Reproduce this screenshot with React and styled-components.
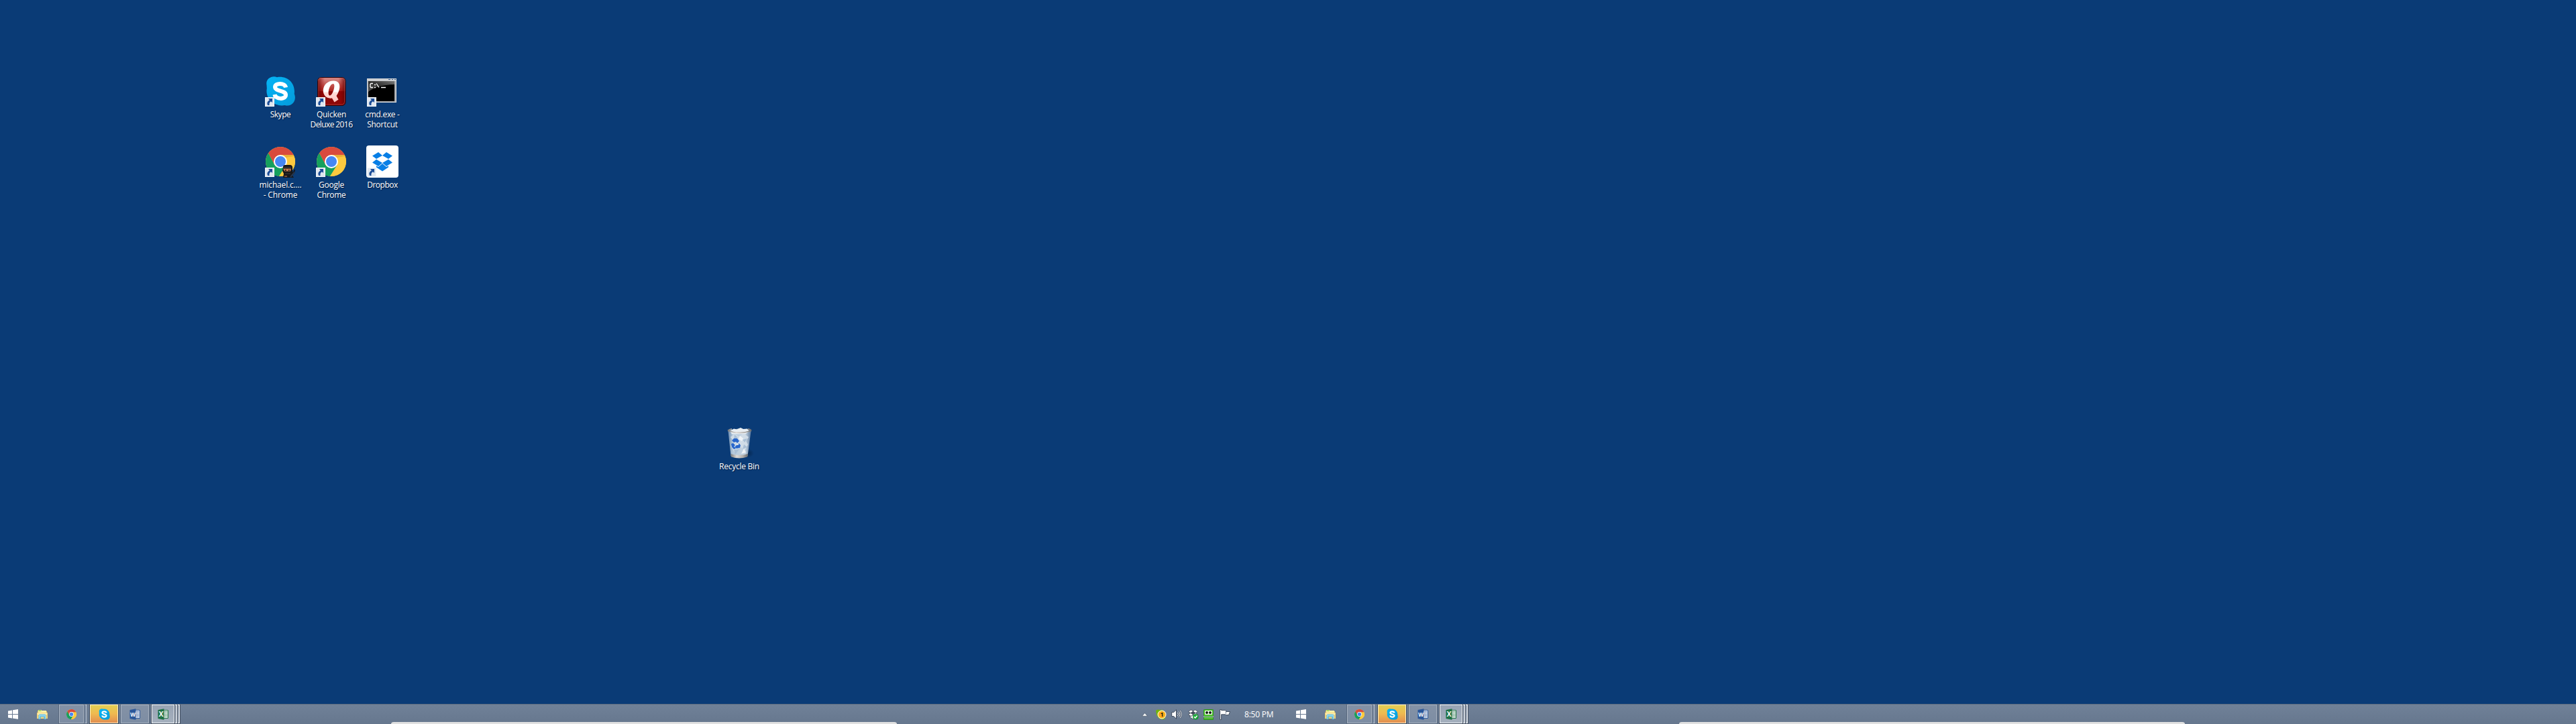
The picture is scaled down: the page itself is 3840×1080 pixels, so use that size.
import React from 'react';
import styled, { createGlobalStyle, css } from 'styled-components';

const GlobalStyle = createGlobalStyle`
  *, *::before, *::after { box-sizing: border-box; }
  html, body { margin: 0; padding: 0; background: #0a3b76; overflow: hidden; }
`;

const Desktop = styled.main`
  width: 3840px;
  height: 1080px;
  display: flex;
  flex-direction: column;
  background: #0a3b76;
  font-family: 'Open Sans', 'Noto Sans', sans-serif;
  overflow: hidden;
`;

const Wallpaper = styled.section`
  flex: 1;
  position: relative;
`;

const IconGrid = styled.div`
  position: absolute;
  left: 380px;
  top: 112px;
  display: grid;
  grid-template-columns: repeat(3, 76px);
  grid-auto-rows: 105px;
`;

const LoosePlace = styled.div`
  position: absolute;
  left: 1064px;
  top: 637px;
  width: 76px;
`;

const Shortcut = styled.figure`
  margin: 0;
  display: flex;
  flex-direction: column;
  align-items: center;
`;

const IconBox = styled.div`
  position: relative;
  width: 48px;
  height: 48px;
  svg { display: block; }
`;

const Arrow = styled.span`
  position: absolute;
  left: 1px;
  bottom: 1px;
  width: 14px;
  height: 14px;
`;

const Caption = styled.figcaption`
  margin-top: 3px;
  display: flex;
  flex-direction: column;
  align-items: center;
`;

const CaptionLine = styled.span`
  font-size: 12px;
  line-height: 15px;
  letter-spacing: ${p => p.$track || 0}px;
  color: #fff;
  white-space: nowrap;
  text-shadow: 1px 1px 1px rgba(0, 10, 40, 0.7);
`;

const ArrowBadge = () => (
  <Arrow>
    <svg width="14" height="14" viewBox="0 0 14 14">
      <rect width="14" height="14" fill="#dfe7f0" />
      <rect x=".5" y=".5" width="13" height="13" fill="none" stroke="#f3f6fa" />
      <path d="M5 2h6v6L9 6.300C6.800 7.500 6 9.200 6.600 12H4.200C2.300 9.100 3.800 5.700 6.900 4.200Z" fill="#1c4d98" />
    </svg>
  </Arrow>
);

const SkypeIcon = ({ size = 48 }) => (
  <svg width={size} height={size} viewBox={size === 48 ? '-2 -2 48 48' : '-0.500 -0.500 45 45'}>
    <defs>
      <linearGradient id="skypeFill" x1="0" y1="0" x2="1" y2="1">
        <stop stopColor="#05b4f5" /><stop offset="1" stopColor="#049bdb" />
      </linearGradient>
    </defs>
    <path d="M1.500 13C-.5 4 9-2 17 1.200 31-1.500 45 9 42.700 26c4 9-2.500 20-14 17C13 46-1 33 1.800 18Z" fill="url(#skypeFill)" />
    <path d="M30 16.500C29 9 13.800 9.200 14 16 14.300 22.600 30 20.500 30 27.500 30 35 14.500 34.500 13.500 27" fill="none" stroke="#fff" strokeWidth="6" />
  </svg>
);

const QuickenIcon = () => (
  <svg width="48" height="48" viewBox="0 0 48 48">
    <defs>
      <linearGradient id="quickenFill" x1="0" y1="0" x2="0" y2="1">
        <stop stopColor="#d8908c" /><stop offset=".48" stopColor="#b02520" /><stop offset=".5" stopColor="#8b0707" /><stop offset="1" stopColor="#8d0808" />
      </linearGradient>
      <linearGradient id="quickenEdge" x1="0" y1="0" x2="1" y2="0">
        <stop stopColor="#5a0000" stopOpacity=".8" /><stop offset=".25" stopColor="#a00" stopOpacity="0" /><stop offset=".75" stopColor="#a00" stopOpacity="0" /><stop offset="1" stopColor="#500" stopOpacity=".8" />
      </linearGradient>
      <linearGradient id="letterFill" x1="0" y1="0" x2="0" y2="1">
        <stop stopColor="#fff" /><stop offset=".5" stopColor="#fff" /><stop offset=".55" stopColor="#ffdedb" /><stop offset="1" stopColor="#ffc2bd" />
      </linearGradient>
    </defs>
    <rect x="3.500" y="3.500" width="41.500" height="42" rx="5" fill="url(#quickenFill)" stroke="#310306" />
    <rect x="4" y="4" width="40.500" height="41" rx="5" fill="url(#quickenEdge)" />
    <rect x="5" y="5" width="38.500" height="39" rx="4" fill="none" stroke="#d96d68" strokeOpacity=".4" />
    <path fillRule="evenodd" d="M27.500 8.500C38 8.500 39 20 31.500 31l3 5.500-6 4-3.500-6C7 37 7 8.500 27.500 8.500ZM26.800 13C20.500 13 17.500 30 21.500 30.500 26 31 31 13.500 26.800 13Z" fill="url(#letterFill)" />
  </svg>
);

const CmdIcon = () => (
  <svg width="48" height="48" viewBox="0 0 48 48">
    <defs>
      <linearGradient id="cmdGlare" x1="0" y1="1" x2="1" y2="0">
        <stop stopColor="#555" /><stop offset=".5" stopColor="#303030" /><stop offset="1" stopColor="#777" />
      </linearGradient>
    </defs>
    <rect x="1" y="5" width="44" height="36" fill="#a8abb0" />
    <rect x="1.500" y="5.500" width="43" height="35" fill="none" stroke="#d6d6d6" />
    <rect x="2" y="6" width="42" height="3" fill="#cdcfd2" />
    <path d="M33 6h3v1h-3zM38 6h2v1h-2zM42 6h2v1h-2z" fill="#315889" />
    <rect x="3" y="9" width="39" height="30" fill="#000" />
    <path d="M3 9h39v5C24 14 10 19 3 25Z" fill="url(#cmdGlare)" />
    <path d="M10 12.500H7l-1 1v4l1 1h3M12 14.500h2M12 18.500h2M15 12.500l4 6M22 18.500h7" fill="none" stroke="#fff" strokeWidth="1.300" />
  </svg>
);

const ChromeArt = () => (
  <>
    <circle cx="22" cy="22" r="22" fill="#fdcb3f" />
    <path d="M22 12h19.600A22 22 0 0 0 4 9.500L13.400 27Z" fill="#d94a3d" />
    <path d="M4 9.500A22 22 0 0 0 20 44L30.700 27 22 32l-8.600-5Z" fill="#16a05e" />
    <path d="M22 12h19.600A22 22 0 0 1 20 44L30.700 27Z" fill="#fdc93f" />
    <path d="M22 12h19.600l.7 2L29 16Z" fill="#c57f25" opacity=".35" />
    <circle cx="22" cy="22" r="10" fill="#fff" />
    <circle cx="22" cy="22" r="8" fill="#4687f4" />
  </>
);

const ChromeIcon = ({ ninja }) => (
  <svg width="48" height="48" viewBox="0 0 48 48">
    <g transform="translate(2 2)"><ChromeArt /></g>
    {ninja && (
      <g>
        <path d="M28 32q0-3 3-3h7q4 0 4 4v7l2-2v-2h2l-1 5-3 4 2 3H28l1-6-2-4Z" fill="#171719" />
        <path d="M28 34.500h12l-1 4H30Z" fill="#c77c4f" />
        <path d="M31 36h1.500v2H31zm5 0h1.500v2H36z" fill="#191919" />
        <path d="M29 32.500h11M31 42h8" stroke="#3c3c40" />
        <path d="M39 47l6-7" stroke="#27364b" strokeWidth="2" />
        <path d="M30 45h4v2h-4z" fill="#7b4b37" />
      </g>
    )}
  </svg>
);

const DropboxIcon = () => (
  <svg width="48" height="48" viewBox="0 0 48 48">
    <rect width="48" height="48" rx="4" fill="#fff" />
    <g fill="#087fe6">
      <path d="M18 10l6 5-9 5-6-4.500ZM30 10l9 5.500-6 4.500-9-5ZM15 20.800l9 5.200-6 5-9-5.500ZM33 20.800l6 4.700-9 5.500-6-5Z" />
      <path d="M24 27l6 5 3-1.800v2.300l-9 6-9-6v-2.300l3 1.800Z" />
    </g>
  </svg>
);

const BinIcon = () => (
  <svg width="48" height="48" viewBox="0 0 48 48">
    <defs>
      <linearGradient id="binGlass" x1="0" y1="0" x2="1" y2="0">
        <stop stopColor="#6f8fb3" /><stop offset=".2" stopColor="#b4c8db" /><stop offset=".75" stopColor="#c5d4e1" /><stop offset="1" stopColor="#5d7ba0" />
      </linearGradient>
      <linearGradient id="binMetal" x1="0" y1="0" x2="1" y2="0">
        <stop stopColor="#77797b" /><stop offset=".35" stopColor="#dedad6" /><stop offset=".7" stopColor="#b5b1ad" /><stop offset="1" stopColor="#66696d" />
      </linearGradient>
      <radialGradient id="binShadow"><stop stopColor="#00142e" stopOpacity=".55" /><stop offset="1" stopColor="#00142e" stopOpacity="0" /></radialGradient>
    </defs>
    <ellipse cx="36" cy="39" rx="10" ry="7" fill="url(#binShadow)" />
    <path d="M7.500 6l4 37q12.500 5 25 0l5-37Z" fill="url(#binGlass)" />
    <path d="M7 5.500q17.500-6 35 0-1 3-17.500 3T7 5.500Z" fill="#8499ae" />
    <path d="M10 6l6-3.500 4 1 6-2.500 4 2 6-.5 3 4-6 4H13Z" fill="#e9eef2" />
    <path d="M11 15l6-5 6 4 8-4 7 5-4 6 3 5-4 8-7-4-9 8-5-9 4-7Z" fill="#d0dce7" />
    <path d="M17 11l5 5-6 2zM29 19l7-2-4 6ZM31 26l5 4-7 3ZM24 33l-6 8-2-7Z" fill="#a9bfd5" />
    <path d="M25 13l5 4-2 4-5-3ZM31 32l3 6-7 2Z" fill="#f0f4f7" />
    <path d="M13 20l3-3h5l3 4-3 3-2-2-3 1ZM12 25l3-1 3 3-2 2 3 3-3 1-3-3ZM23 24l3 3-1 4-5 1-3-2 3-3 3 0Z" fill="#2866cc" />
    <path d="M11.200 40q13 4 25.700 0l-.6 4.500q-12.500 4-24.500 0Z" fill="url(#binMetal)" />
    <path d="M7 5.500q17.500 6 35 0M7 5.500q2-2 6-2.500M42 5.500q-1-2-5-2.500" fill="none" stroke="url(#binMetal)" strokeWidth="1.800" />
  </svg>
);

const SHORTCUTS = [
  { icon: <SkypeIcon />, lines: [['Skype', -0.45]] },
  { icon: <QuickenIcon />, lines: [['Quicken', -0.25], ['Deluxe 2016', -0.6]] },
  { icon: <CmdIcon />, lines: [['cmd.exe -', -0.3], ['Shortcut', -0.25]] },
  { icon: <ChromeIcon ninja />, lines: [['michael.c....', -0.17], ['- Chrome', -0.15]] },
  { icon: <ChromeIcon />, lines: [['Google', -0.25], ['Chrome', -0.35]] },
  { icon: <DropboxIcon />, lines: [['Dropbox', -0.5]] },
];

const DesktopIcon = ({ icon, lines, link = true }) => (
  <Shortcut>
    <IconBox>{icon}{link && <ArrowBadge />}</IconBox>
    <Caption>{lines.map(([text, track]) => <CaptionLine key={text} $track={track}>{text}</CaptionLine>)}</Caption>
  </Shortcut>
);

const Taskbars = styled.footer`
  display: flex;
  height: 30px;
`;

const Taskbar = styled.div`
  position: relative;
  width: 1920px;
  height: 30px;
  display: flex;
  align-items: stretch;
  border-top: 1px solid #5d6c81;
  background: linear-gradient(#708198, #66778e);
`;

const Launcher = styled.div`
  width: ${p => p.$w}px;
  padding-left: ${p => p.$pad}px;
  display: flex;
  align-items: center;
`;

const Tasks = styled.div`
  display: flex;
  gap: 2px;
`;

const tones = {
  idle: css`background: linear-gradient(#8492a6, #7d8da3); border-color: #a9b4c2;`,
  alert: css`background: linear-gradient(#e2cf54, #efba50 48%, #e28e50); border-color: #fff0c4;`,
  active: css`background: linear-gradient(#98a4b4, #a5b0be); border-color: #f2f5f8;`,
};

const edge = { idle: '#56667c', alert: '#404b5d', active: '#414d5f' };

const TaskGroup = styled.div`
  display: flex;
  height: 29px;
  border: 1px solid ${p => edge[p.$tone]};
  border-top: 0;
  background: ${p => edge[p.$tone]};
  gap: 1px;
`;

const TaskButton = styled.div`
  width: ${p => p.$w}px;
  height: 28px;
  border: 1px solid;
  display: flex;
  align-items: center;
  justify-content: center;
  ${p => tones[p.$tone]}
`;

const StackEdge = styled.div`
  width: ${p => p.$w}px;
  height: 28px;
  border: 1px solid;
  border-left: 0;
  ${p => tones[p.$tone]}
`;

const WindowPeek = styled.div`
  position: absolute;
  left: 583px;
  bottom: 0;
  width: 754px;
  height: 3px;
  border-radius: 4px 4px 0 0 / 3px 3px 0 0;
  background: #e0e0e0;
`;

const Tray = styled.div`
  margin-left: auto;
  width: 218px;
  display: grid;
  grid-template-columns: 21px 23px 25px 23px 24px 37px 1fr;
  align-items: center;
  justify-items: start;
  svg { display: block; }
`;

const Clock = styled.span`
  font-size: 12px;
  line-height: 16px;
  letter-spacing: -0.2px;
  color: #fff;
  white-space: nowrap;
`;

const WindowsLogo = () => (
  <svg width="15" height="15" viewBox="0 0 15 15">
    <path d="M0 2.400l6-.9V7H0zM7 1.300L15 0v7H7zM0 8h6v5.500l-6-.9zM7 8h8v6.700l-8-1.100z" fill="#fff" />
  </svg>
);

const FolderIcon = () => (
  <svg width="17" height="16" viewBox="0 0 17 16">
    <path d="M1 2h6l1 1h7v11H1z" fill="#e6c76d" />
    <path d="M2 1h5v1h7v3H2z" fill="#fff2a8" />
    <path d="M2.500 1.500h4v1.200h-4z" fill="#64bd36" />
    <path d="M0 5h16v9H0z" fill="#f0d27b" />
    <path d="M1 6h14v2H1z" fill="#fff0b5" />
    <path d="M2.500 15V9.500q0-2 2-2h7q2 0 2 2V15h-3v-3.500h-5V15Z" fill="#51b5df" />
    <path d="M3.500 14.500V9h9v5.500M3.500 10h9" fill="none" stroke="#b6e8f6" strokeWidth=".8" />
  </svg>
);

const ChromeSmall = () => (
  <svg width="15" height="15" viewBox="0 0 44 44"><ChromeArt /></svg>
);

const OfficeIcon = ({ color, letter }) => (
  <svg width="17" height="17" viewBox="0 0 17 17">
    <path d="M8.500 2.500h7v12h-7z" fill="#fff" stroke={color} />
    {letter === 'W'
      ? <path d="M10 4.500h4.500M10 6.500h4.500M10 8.500h4.500M10 10.500h4.500M10 12.500h4.500" stroke={color} strokeWidth=".8" />
      : <path d="M10 4.500h2m.6 0h2M10 6.500h2m.6 0h2M10 8.500h2m.6 0h2M10 10.500h2m.6 0h2M10 12.500h2m.6 0h2" stroke={color} strokeWidth=".9" />}
    <path d="M.5 2l9-1.700v16.400L.5 15z" fill={color} />
    <text x="5" y={letter === 'W' ? 11.500 : 12} textAnchor="middle" fontFamily="Open Sans, sans-serif" fontWeight="700" fontSize={letter === 'W' ? 8 : 10} fill="#fff">{letter}</text>
  </svg>
);

const UpArrow = () => (
  <svg width="9" height="6" viewBox="0 0 9 6"><path d="M.5 5.200L4.500.7l4 4.500Z" fill="#fff" stroke="#3f4b5c" strokeWidth=".6" /></svg>
);

const MessageBadge = () => (
  <svg width="16" height="16" viewBox="0 0 16 16">
    <path d="M1 1q3-1 5 0 6-1 8 5v7q-1 3-4 2-6 0-8-5Q0 7 1 6-1 3 1 1Z" fill="#70b50c" />
    <circle cx="9" cy="8" r="5.900" fill="#ffad16" stroke="#fff0c6" strokeWidth="1.200" />
    <text x="9" y="11.300" textAnchor="middle" fontFamily="Open Sans, sans-serif" fontWeight="700" fontSize="9" fill="#211b10">1</text>
  </svg>
);

const Speaker = () => (
  <svg width="16" height="15" viewBox="0 0 16 15">
    <path d="M.7 4.500h3L7.500.8v13.400L3.700 10.500h-3Z" fill="#fff" stroke="#333e50" strokeWidth=".9" />
    <path d="M9.500 5q2 2.500 0 5M11.500 3.300q3 4.200 0 8.400M13.400 2q3.500 5.500 0 11" fill="none" stroke="#3c485b" strokeWidth="1.700" />
    <path d="M9.500 5q2 2.500 0 5M11.500 3.300q3 4.200 0 8.400M13.400 2q3.500 5.500 0 11" fill="none" stroke="#fff" strokeWidth=".9" />
  </svg>
);

const DropboxSync = () => (
  <svg width="16" height="16" viewBox="0 0 16 16">
    <path d="M4.500 .5L7.500 2.300 10.500.5l4.500 3L12.500 5.500l2.500 2.300-2.500 2v2L7.500 15l-5-3.200v-2L0 7.800l2.500-2.300L0 3.500Z" fill="#414b59" />
    <path d="M4.500 1.200L7.200 3 3.800 5.200 1 3.500ZM10.500 1.200L14 3.500l-2.800 1.700L7.800 3ZM3.800 5.900l3.400 2.200-2.700 2L1 7.800ZM11.200 5.900L14 7.800l-3.500 2.300-2.700-2ZM4.500 11l3-2 3 2 1.300-.6v1l-4.300 2.800-4.300-2.800v-1Z" fill="#fff" />
    <circle cx="11.300" cy="11.300" r="4" fill="#20ae3d" stroke="#087323" strokeWidth=".5" />
    <path d="M9 11.200l1.700 1.800 3-3.500" fill="none" stroke="#fff" strokeWidth="1.300" />
  </svg>
);

const RobotIcon = () => (
  <svg width="15" height="16" viewBox="0 0 15 16">
    <rect x=".4" y=".4" width="14.200" height="10" rx="1" fill="#4cc42b" stroke="#258e13" strokeWidth=".8" />
    <rect x="2" y="2" width="11" height="6" rx="1" fill="#f4fff0" />
    <circle cx="5" cy="5" r="2" fill="#101b0d" /><circle cx="10" cy="5" r="2" fill="#101b0d" />
    <path d="M0 11h15" stroke="#e5efe4" strokeWidth=".8" />
    <rect x=".4" y="12" width="14.200" height="3.600" rx=".7" fill="#43b823" stroke="#258e13" strokeWidth=".8" />
    <path d="M1 12.800h13" stroke="#a3ed86" strokeWidth=".7" />
  </svg>
);

const FlagIcon = () => (
  <svg width="17" height="16" viewBox="0 0 17 16">
    <path d="M.6.5h2v1h6q1 0 1 2h6l-2 5h-4L8.600 7.800h-6v7.700h-2Z" fill="#fff" stroke="#384456" strokeWidth=".9" />
    <path d="M9.400 3.400v3.200l-1 1" fill="none" stroke="#798493" />
  </svg>
);

const Bar = ({ tray }) => (
  <Taskbar>
    <Launcher $w={55} $pad={12}><WindowsLogo /></Launcher>
    <Launcher $w={32} $pad={0}><FolderIcon /></Launcher>
    <Tasks>
      <TaskGroup $tone="idle">
        <TaskButton $tone="idle" $w={37}><ChromeSmall /></TaskButton>
        <StackEdge $tone="idle" $w={4} />
      </TaskGroup>
      <TaskGroup $tone="alert">
        <TaskButton $tone="alert" $w={42}><SkypeIcon size={17} /></TaskButton>
      </TaskGroup>
      <TaskGroup $tone="idle">
        <TaskButton $tone="idle" $w={42}><OfficeIcon color="#2b579a" letter="W" /></TaskButton>
      </TaskGroup>
      <TaskGroup $tone="active">
        <TaskButton $tone="active" $w={34}><OfficeIcon color="#1e7145" letter="X" /></TaskButton>
        <StackEdge $tone="active" $w={3} />
        <StackEdge $tone="active" $w={3} />
      </TaskGroup>
    </Tasks>
    {tray && (
      <Tray>
        <UpArrow /><MessageBadge /><Speaker /><DropboxSync /><RobotIcon /><FlagIcon />
        <Clock>8:50 PM</Clock>
      </Tray>
    )}
    <WindowPeek />
  </Taskbar>
);

export default function App() {
  return (
    <Desktop>
      <GlobalStyle />
      <Wallpaper>
        <IconGrid>
          {SHORTCUTS.map(s => <DesktopIcon key={s.lines.map(l => l[0]).join(' ')} {...s} />)}
        </IconGrid>
        <LoosePlace>
          <DesktopIcon icon={<BinIcon />} lines={[['Recycle Bin', -0.25]]} link={false} />
        </LoosePlace>
      </Wallpaper>
      <Taskbars>
        <Bar tray />
        <Bar />
      </Taskbars>
    </Desktop>
  );
}
